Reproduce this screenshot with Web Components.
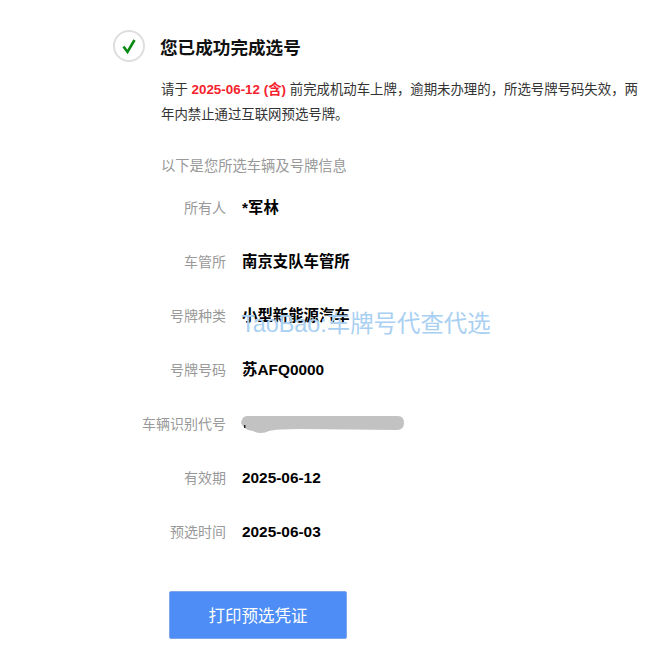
<!DOCTYPE html>
<html>
<head>
<meta charset="utf-8">
<style>
  html, body { margin: 0; padding: 0; background: #fff; }
  body { font-family: "Liberation Sans", "Noto Sans CJK SC", sans-serif; }
</style>
</head>
<body>
<result-page></result-page>

<template id="info-row-tpl">
  <style>
    :host { display: flex; align-items: center; height: 54px; font-size: 14px; }
    .label { width: 242px; padding: 0 16px 2px 0; box-sizing: border-box; text-align: right; color: #999; flex-shrink: 0; }
    .value { color: #000; font-size: 15.4px; font-weight: 700; line-height: 20px; }
  </style>
  <div class="label"><slot name="label"></slot></div>
  <div class="value"><slot></slot></div>
</template>

<script>
class InfoRow extends HTMLElement {
  constructor() {
    super();
    const shadowRoot = this.attachShadow({ mode: "open" });
    shadowRoot.appendChild(document.querySelector("#info-row-tpl").content.cloneNode(true));
  }
}

class CheckBadge extends HTMLElement {
  constructor() {
    super();
    const shadowRoot = this.attachShadow({ mode: "open" });
    shadowRoot.innerHTML = `
      <style>
        :host { display: block; width: 32px; height: 32px; flex-shrink: 0; }
        svg { display: block; }
      </style>
      <svg width="32" height="32" viewBox="0 0 32 32">
        <circle cx="16" cy="16" r="15" fill="#fff" stroke="#e0dddd" stroke-width="2"/>
        <path d="M10.5 16.5 L14.5 22 L21.5 10" fill="none" stroke="#0a8a12" stroke-width="2.6"/>
      </svg>
    `;
  }
}

class PrintButton extends HTMLElement {
  constructor() {
    super();
    const shadowRoot = this.attachShadow({ mode: "open" });
    shadowRoot.innerHTML = `
      <style>
        :host { display: block; width: 178px; height: 48px; }
        button {
          width: 100%;
          height: 100%;
          border: 1px solid #7ea6e8;
          border-radius: 2px;
          background: #4d8df5;
          color: #fff;
          font-family: inherit;
          font-size: 16.5px;
          padding: 0;
        }
      </style>
      <button type="button"><slot></slot></button>
    `;
  }
}

class ResultPage extends HTMLElement {
  constructor() {
    super();
    const shadowRoot = this.attachShadow({ mode: "open" });
    shadowRoot.innerHTML = `
      <style>
        :host { display: block; position: relative; width: 667px; height: 667px; overflow: hidden; box-sizing: border-box; padding-top: 30px; }
        .head { display: flex; align-items: center; gap: 15px; padding-left: 113px; height: 32px; }
        .title { font-size: 17.6px; font-weight: 700; color: #111; }
        .notice { margin: 15px 0 0 161px; width: 480px; font-size: 13.4px; line-height: 25px; color: #333; }
        .notice b { color: #f5222d; }
        .sub { margin: 29px 0 0 161px; font-size: 14.3px; line-height: 20px; color: #999; }
        .rows { margin-top: 5px; }
        .blur { display: block; margin-left: -1px; }
        .action { margin: 32px 0 0 169px; }
        .mark { position: absolute; left: 241px; top: 309px; font-size: 23.4px; line-height: 30px; color: #a9d0f2; white-space: nowrap; pointer-events: none; }
      </style>
      <div class="head">
        <check-badge></check-badge>
        <div class="title">您已成功完成选号</div>
      </div>
      <div class="notice">请于 <b>2025-06-12 (含)</b> 前完成机动车上牌，逾期未办理的，所选号牌号码失效，两年内禁止通过互联网预选号牌。</div>
      <div class="sub">以下是您所选车辆及号牌信息</div>
      <div class="rows">
        <info-row><span slot="label">所有人</span>*军林</info-row>
        <info-row><span slot="label">车管所</span>南京支队车管所</info-row>
        <info-row><span slot="label">号牌种类</span>小型新能源汽车</info-row>
        <info-row><span slot="label">号牌号码</span>苏AFQ0000</info-row>
        <info-row><span slot="label">车辆识别代号</span>
          <svg class="blur" width="163" height="20" viewBox="0 0 163 20">
            <path d="M6 2 H157 Q163 2 163 9 Q163 16 156 16 L60 15 Q35 15 28 17 Q20 21 12 17 Q3 16 0 9 Q1 2 6 2 Z" fill="#c2c2c2"/>
            <rect x="3" y="11" width="1.5" height="3" fill="#222"/>
          </svg>
        </info-row>
        <info-row><span slot="label">有效期</span>2025-06-12</info-row>
        <info-row><span slot="label">预选时间</span>2025-06-03</info-row>
      </div>
      <div class="action"><print-button>打印预选凭证</print-button></div>
      <div class="mark">TaoBao:车牌号代查代选</div>
    `;
  }
}

customElements.define("info-row", InfoRow);
customElements.define("check-badge", CheckBadge);
customElements.define("print-button", PrintButton);
customElements.define("result-page", ResultPage);
</script>
</body>
</html>
